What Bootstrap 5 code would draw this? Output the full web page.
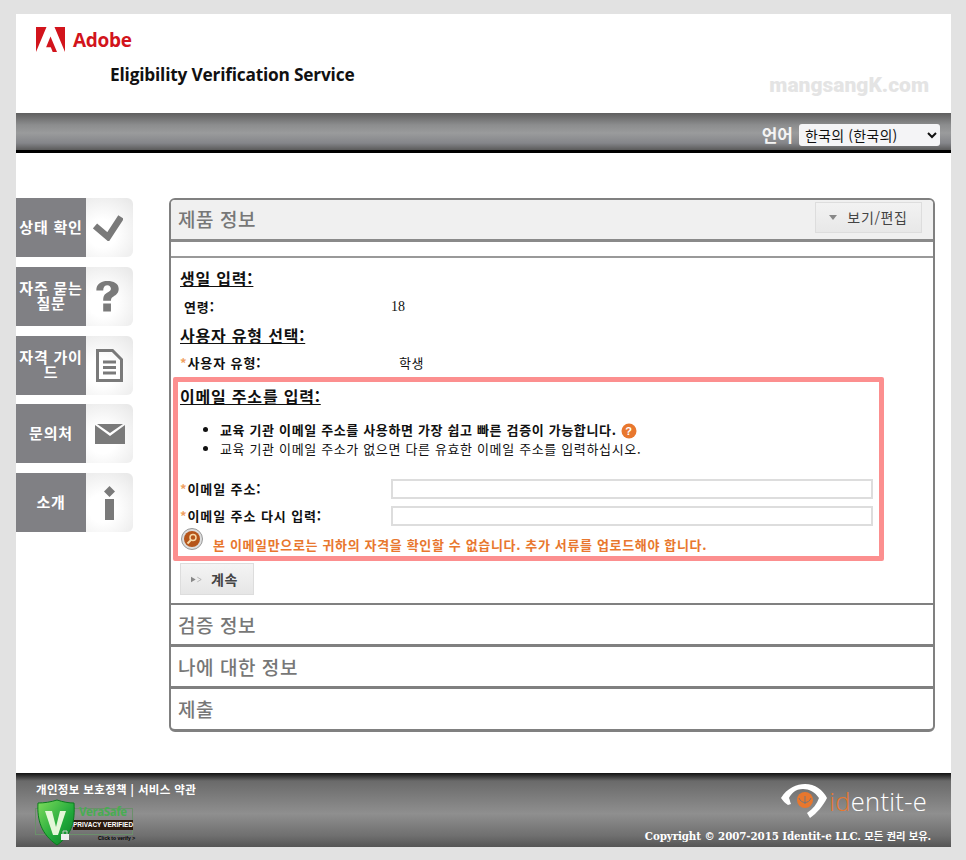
<!DOCTYPE html>
<html lang="ko">
<head>
    <meta charset="UTF-8">
    <title>Eligibility Verification Service</title>
    <link rel="stylesheet" href="https://cdn.jsdelivr.net/npm/bootstrap@5.3.0/dist/css/bootstrap.min.css">
    <style>
        body {
            background: #e2e2e2;
            font-family: "Noto Sans CJK KR", "Liberation Sans", sans-serif;
            color: #111;
            font-size: 13px;
            letter-spacing: .65px;
        }
        .shell {
            width: 935px;
            height: 833px;
            margin: 14px 0 0 16px;
            background: #fff;
        }
        .top-head { height: 99px; padding: 13px 20px 0; letter-spacing: 0; }
        .brand-word { color: #d2141c; font: 700 19px/24px "Open Sans", sans-serif; letter-spacing: -.3px; }
        .service-name { font: 700 17.3px/24px "Open Sans", sans-serif; color: #111; margin: 11px 0 0 74px; letter-spacing: -.2px; }
        .watermark { font: 900 21px/24px Roboto, sans-serif; color: #e4e4e4; top: 59px; right: 22px; }
        .lang-band {
            height: 40px;
            padding: 10px 11px 0 0;
            background: linear-gradient(#5f5f5f 0, #8c8d8e 30%, #9a9b9c 50%, #85868a 75%, #5c5c5c 92%, #000 93%, #000 100%);
            color: #f4f4f4;
        }
        .lang-label { font-size: 17px; font-weight: 700; line-height: 23px; letter-spacing: 0; margin-right: 6px; }
        .lang-pick {
            width: 141px;
            height: 22px;
            margin-top: 1px;
            padding: 0 2px;
            border: 0;
            border-radius: 3px;
            font-size: 14px;
            letter-spacing: .2px;
            color: #111;
            background: #f4f4f6;
        }
        .main-area { height: 620px; padding-top: 45px; }
        .side-col { width: 153px; flex: none; }
        .side-tab { width: 117px; height: 59px; margin-bottom: 9.75px; }
        .side-name {
            width: 70px;
            background: #808084;
            color: #fff;
            font-weight: 700;
            font-size: 15px;
            line-height: 15px;
            letter-spacing: .8px;
            text-align: center;
            padding: 0 2px 2px;
        }
        .side-icon {
            width: 47px;
            background: radial-gradient(circle at 35% 60%, #fff 30%, #e6e6e6 100%);
            border-radius: 0 6px 6px 0;
        }
        .icon-left { padding-right: 4px; }
        .form-panel {
            width: 766px;
            height: 534px;
            border: solid #808080;
            border-width: 2px 2px 3px;
            border-radius: 6px;
            overflow: hidden;
        }
        .panel-title { height: 42px; background: #f0f0f0; border-bottom: 3px solid #8a8a8a; padding: 0 11px 0 7px; }
        .step-name { font-size: 19px; font-weight: 500; color: #777; line-height: 37px; letter-spacing: .55px; }
        .edit-btn {
            width: 107px;
            height: 31px;
            margin-top: 2px;
            padding: 0;
            gap: 10px;
            border: 1px solid #ddd;
            border-radius: 0;
            background: linear-gradient(#f2f2f2, #e8e8e8);
            color: #444;
            font-size: 14px;
            letter-spacing: .65px;
        }
        .mini-tri { border: 4px solid transparent; border-top: 5px solid #888; border-bottom: 0; display: inline-block; }
        .panel-gap { height: 16px; border-bottom: 2px solid #999; }
        .step-body { height: 347px; padding: 9px 9px 0; border-bottom: 2px solid #808080; }
        .sec-head { font-size: 16px; font-weight: 700; text-decoration: underline; line-height: 22px; margin: 0; letter-spacing: .8px; }
        .field-row { height: 27px; line-height: 20px; }
        .field-name { width: 211px; flex: none; font-weight: 700; letter-spacing: .9px; }
        .age-name { width: 207px; }
        .age-val { font-family: "Liberation Serif", serif; font-size: 14px; letter-spacing: 0; }
        .type-row { margin-top: 3px; }
        .req { color: #f0a060; }
        .mail-box {
            width: 711px;
            height: 184px;
            margin: 1px 0 0 -7px;
            padding: 3px 7px 0 2px;
            border: 5px solid #fc8f8f;
            border-radius: 2px;
        }
        .note-list { margin: 13px 0 17.5px; padding-left: 40px; line-height: 19px; }
        .mail-input { width: 482px; height: 20px; border: 2px solid #ddd; flex: none; }
        .warn-row { color: #e8772e; font-weight: 700; line-height: 18px; margin: -2px 0 0 1px; gap: 10px; }
        .warn-text { margin-top: 8.5px; }
        .go-btn {
            width: 74px;
            height: 32px;
            margin-top: 2px;
            padding: 0 0 0 10px;
            gap: 9px;
            border: 1px solid #ddd;
            border-radius: 0;
            background: linear-gradient(#f4f4f4, #e6e6e6);
            color: #444;
            font-size: 14px;
            font-weight: 700;
            letter-spacing: .65px;
        }
        .closed-step { height: 42px; padding: 1px 7px 0; border-bottom: 3px solid #808080; }
        .closed-step:last-child { border-bottom: 0; }
        .foot-band {
            height: 74px;
            padding: 8px 20px 0;
            background: linear-gradient(#111 0, #333 3px, #6a6a6a 8px, #8f8f8f 55%, #6f6f6f 85%, #555 100%);
            color: #fff;
            font-size: 11.5px;
            font-weight: 700;
            letter-spacing: .35px;
        }
        .vera-seal { width: 100px; height: 48px; letter-spacing: 0; }
        .vera-frame { left: -1px; top: 10px; width: 98px; height: 27px; border: 1px solid #6b8f6b; }
        .vera-word { left: 43px; top: 7px; font: 700 11.5px/14px "Open Sans", sans-serif; letter-spacing: -.4px; color: #48ad52; }
        .vera-tag { left: 37px; top: 22px; width: 60px; background: #2a1a0c; font: 700 6.5px/10px "Liberation Sans", sans-serif; white-space: nowrap; text-align: center; }
        .vera-click { left: 62px; top: 36px; color: #000; font: 700 5px/8px "Liberation Sans", sans-serif; white-space: nowrap; }
        .id-logo { margin: 1px 4px 0 0; }
        .id-word { font: 300 25.5px/30px "Open Sans", sans-serif; color: #fff; letter-spacing: .3px; }
        .id-word b { color: #e8772e; font-weight: 300; }
        .copy-line { font-size: 10.3px; line-height: 14px; font-weight: 700; margin-top: 9px; font-family: "DejaVu Serif", "Noto Sans CJK KR", serif; letter-spacing: -.1px; }
    </style>
</head>
<body>
    <div class="shell">
        <!-- header -->
        <div class="top-head position-relative">
            <div class="d-flex align-items-center gap-2">
                <svg width="29" height="25" viewBox="0 0 29 25"><path fill="#d2141c" d="M0 0h10.500L0 25zM18.500 0H29v25zM14.500 9.500l6.500 15.500h-4.300l-1.900-4.800h-4.700z"/></svg>
                <span class="brand-word">Adobe</span>
            </div>
            <div class="service-name">Eligibility Verification Service</div>
            <div class="watermark position-absolute">mangsangK.com</div>
        </div>
        <div class="lang-band d-flex justify-content-end">
            <span class="lang-label">언어</span>
            <select class="lang-pick"><option>한국의 (한국의)</option></select>
        </div>

        <div class="main-area d-flex">
            <!-- left menu -->
            <div class="side-col">
                <div class="side-tab d-flex">
                    <div class="side-name d-flex align-items-center justify-content-center">상태 확인</div>
                    <div class="side-icon icon-left d-flex align-items-center justify-content-center">
                        <svg width="30" height="26" viewBox="0 0 30 26"><path fill="none" stroke="#7a7a7a" stroke-width="6.500" d="M2 11l13 11L28 2"/></svg>
                    </div>
                </div>
                <div class="side-tab d-flex">
                    <div class="side-name d-flex align-items-center justify-content-center">자주 묻는 질문</div>
                    <div class="side-icon icon-left d-flex align-items-center justify-content-center">
                        <svg width="25" height="31" viewBox="0 0 26 36"><path fill="#7a7a7a" d="M0 11C0 3 6 0 13 0s13 3 13 9c0 5-3 7-6 9-2 1-3 2-3 5H8c0-5 1-7 4-9 3-2 5-3 5-5s-2-4-4-4c-3 0-5 2-5 6zM8 26h9v9.500H8z"/></svg>
                    </div>
                </div>
                <div class="side-tab d-flex">
                    <div class="side-name d-flex align-items-center justify-content-center">자격 가이드</div>
                    <div class="side-icon d-flex align-items-center justify-content-center">
                        <svg width="27" height="33" viewBox="0 0 27 33"><path fill="none" stroke="#7a7a7a" stroke-width="3" d="M1.500 1.500h15l9 9v21h-24z"/><path stroke="#7a7a7a" stroke-width="3" d="M7 13h13M7 18.500h13M7 24h13"/></svg>
                    </div>
                </div>
                <div class="side-tab d-flex">
                    <div class="side-name d-flex align-items-center justify-content-center">문의처</div>
                    <div class="side-icon d-flex align-items-center justify-content-center">
                        <svg width="30" height="20" viewBox="0 0 30 20"><path fill="#7a7a7a" d="M0 1l15 11L30 1v19H0zM2 0h26L15 9z"/></svg>
                    </div>
                </div>
                <div class="side-tab d-flex">
                    <div class="side-name d-flex align-items-center justify-content-center">소개</div>
                    <div class="side-icon d-flex align-items-center justify-content-center">
                        <svg width="11" height="34" viewBox="0 0 11 34"><path fill="#7a7a7a" d="M5.500 0L11 5.500 5.500 11 0 5.500zM1 13h9v21H1z"/></svg>
                    </div>
                </div>
            </div>

            <!-- form -->
            <div class="form-panel">
                <div class="panel-title d-flex justify-content-between align-items-start">
                    <span class="step-name">제품 정보</span>
                    <button type="button" class="btn edit-btn d-flex align-items-center justify-content-center"><span class="mini-tri"></span>보기/편집</button>
                </div>
                <div class="panel-gap"></div>
                <div class="step-body">
                    <h2 class="sec-head">생일 입력:</h2>
                    <div class="field-row d-flex align-items-center mt-1 ps-1">
                        <span class="field-name age-name">연령:</span>
                        <span class="age-val">18</span>
                    </div>
                    <h2 class="sec-head mt-1">사용자 유형 선택:</h2>
                    <div class="field-row type-row d-flex align-items-center">
                        <span class="field-name"><span class="req">*</span>사용자 유형:</span>
                        <span class="ms-2">학생</span>
                    </div>
                    <div class="mail-box">
                        <h2 class="sec-head">이메일 주소를 입력:</h2>
                        <ul class="note-list">
                            <li class="fw-bold">교육 기관 이메일 주소를 사용하면 가장 쉽고 빠른 검증이 가능합니다.
                                <svg width="16" height="16" viewBox="0 0 16 16"><circle cx="8" cy="8" r="7.500" fill="#e8772e"/><text x="8" y="12" text-anchor="middle" fill="#fff" font-size="11" font-weight="700" font-family="Liberation Sans">?</text></svg>
                            </li>
                            <li>교육 기관 이메일 주소가 없으면 다른 유효한 이메일 주소를 입력하십시오.</li>
                        </ul>
                        <div class="field-row d-flex align-items-center">
                            <span class="field-name"><span class="req">*</span>이메일 주소:</span>
                            <input type="text" class="mail-input">
                        </div>
                        <div class="field-row d-flex align-items-center">
                            <span class="field-name"><span class="req">*</span>이메일 주소 다시 입력:</span>
                            <input type="text" class="mail-input">
                        </div>
                        <div class="warn-row d-flex align-items-start">
                            <svg width="22" height="22" viewBox="0 0 22 22"><circle cx="11" cy="11" r="10.500" fill="#ddd" stroke="#999"/><circle cx="11" cy="11" r="8" fill="#b5551a"/><circle cx="12" cy="9.500" r="3" fill="none" stroke="#f6d9a8" stroke-width="1.500"/><path stroke="#f6d9a8" stroke-width="2" d="M10 12l-3.500 3.500"/></svg>
                            <span class="warn-text">본 이메일만으로는 귀하의 자격을 확인할 수 없습니다. 추가 서류를 업로드해야 합니다.</span>
                        </div>
                    </div>
                    <button type="button" class="btn go-btn d-flex align-items-center">
                        <svg width="11" height="7" viewBox="0 0 14 7"><path fill="#888" d="M0 0l6 3.500L0 7z"/><path fill="none" stroke="#aaa" d="M8 .5l5 3-5 3"/></svg>계속
                    </button>
                </div>
                <div class="closed-step"><span class="step-name">검증 정보</span></div>
                <div class="closed-step"><span class="step-name">나에 대한 정보</span></div>
                <div class="closed-step"><span class="step-name">제출</span></div>
            </div>
        </div>

        <!-- footer -->
        <div class="foot-band d-flex justify-content-between">
            <div>
                <div>개인정보 보호정책 | 서비스 약관</div>
                <div class="vera-seal position-relative">
                    <span class="vera-frame position-absolute"></span>
                    <span class="vera-word position-absolute">VeraSafe</span>
                    <span class="vera-tag position-absolute">PRIVACY VERIFIED</span>
                    <span class="vera-click position-absolute">Click to verify &gt;</span>
                    <svg class="position-absolute top-0 start-0" width="40" height="48" viewBox="0 0 40 48">
                        <defs><linearGradient id="shieldFill" x1="0" y1="0" x2="1" y2="1"><stop offset="0" stop-color="#7fdc5c"/><stop offset=".6" stop-color="#1fa83a"/><stop offset="1" stop-color="#0b7a25"/></linearGradient></defs>
                        <path fill="url(#shieldFill)" stroke="#0c7a1e" d="M21 2c6 2 12 3 17 3 1 17-1 31-17 42C5 36 1 22 2 5c6 0 13-1 19-3z"/>
                        <path fill="#e4f7d8" d="M9 13h7l4 16 4-16h6l-8 24h-5z"/>
                        <path fill="#eee" d="M25 36h8v6h-8z"/><path fill="none" stroke="#ccc" d="M27 36v-3h4v3"/>
                    </svg>
                </div>
            </div>
            <div class="d-flex flex-column align-items-end">
                <div class="id-logo d-flex align-items-center">
                    <svg width="50" height="38" viewBox="4 6 50 38"><path fill="#fff" d="M6 22C12 12 22 8 30 8c10 0 18 6 22 14-4 8-10 15-17 20l-3-5c6-4 10-9 12-15-4-6-10-9-16-9-8 0-12 5-14 9 1 2 1 4 2 6l-3 1c-3-2-5-4-7-7z"/><circle cx="30" cy="24" r="8" fill="#e8772e"/><path fill="none" stroke="#777" d="M24 22c2 6 10 6 12 0M30 20v8"/></svg>
                    <span class="id-word"><b>id</b>entit-e</span>
                </div>
                <div class="copy-line">Copyright © 2007-2015 Identit-e LLC. 모든 권리 보유.</div>
            </div>
        </div>
    </div>
    <script src="https://cdn.jsdelivr.net/npm/bootstrap@5.3.0/dist/js/bootstrap.bundle.min.js"></script>
</body>
</html>
